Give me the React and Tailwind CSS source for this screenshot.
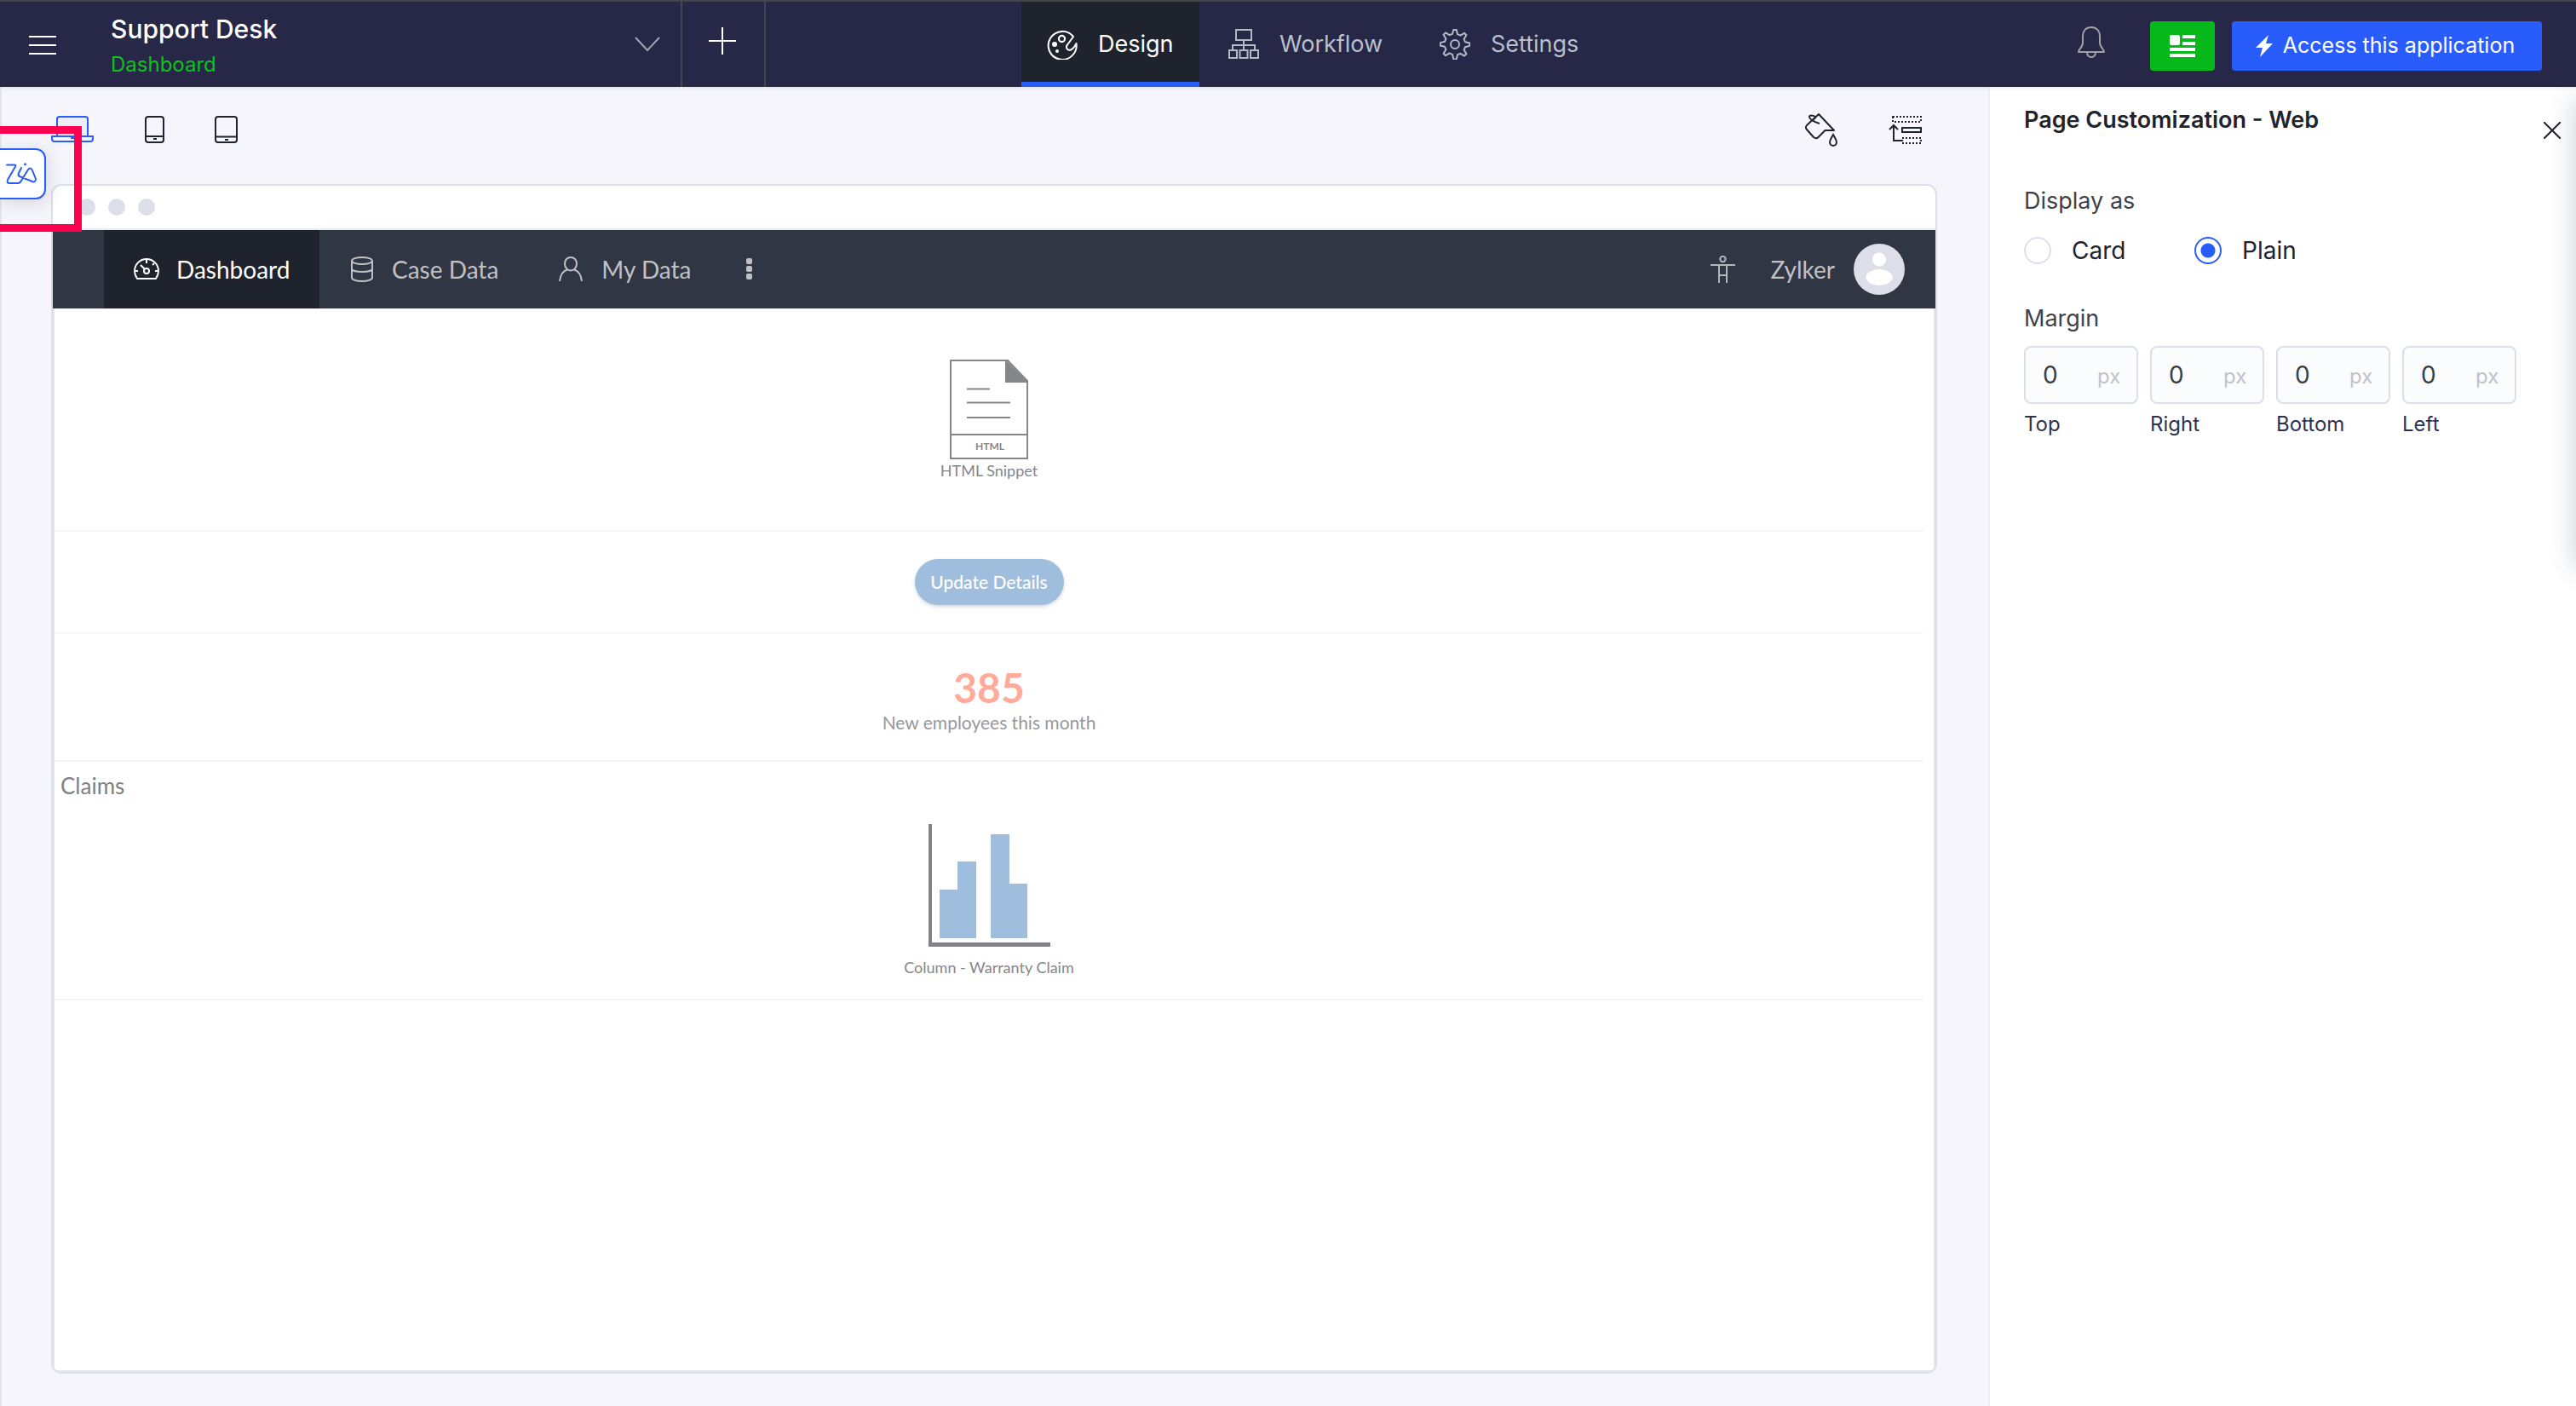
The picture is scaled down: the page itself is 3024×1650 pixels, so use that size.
import { useState } from 'react';

const MenuIcon = () => (
  <svg width="32" height="22" viewBox="0 0 32 22" stroke="#fff" strokeWidth="2">
    <path d="M0 1h32M0 11h32M0 21h32" />
  </svg>
);

const ChevronIcon = () => (
  <svg width="30" height="18" viewBox="0 0 30 18" fill="none" stroke="#a3a5b3" strokeWidth="2">
    <path d="M1 1l14 15L29 1" />
  </svg>
);

const PlusIcon = () => (
  <svg width="32" height="32" viewBox="0 0 32 32" stroke="#fff" strokeWidth="2">
    <path d="M16 0v32M0 16h32" />
  </svg>
);

const PaletteIcon = () => (
  <svg width="36" height="36" viewBox="0 0 36 36" fill="none" stroke="#fff" strokeWidth="2">
    <path d="M31 9A16.500 16.500 0 1 0 34.500 17c-1.500 3-3.500 6-6.500 7.500-4 1.500-6.500-3-4-6C25.500 16.500 28.500 12.500 31 9z" strokeLinejoin="round" />
    <circle cx="17.500" cy="11.500" r="3.600" strokeWidth="2.200" />
    <circle cx="9" cy="18" r="3" fill="#fff" stroke="none" />
    <circle cx="12" cy="26" r="2" fill="#fff" stroke="none" />
  </svg>
);

const WorkflowIcon = () => (
  <svg width="36" height="36" viewBox="0 0 36 36" fill="none" stroke="#b5bac6" strokeWidth="2">
    <rect x="9" y="1" width="18" height="12" />
    <path d="M18 13v12M5 25v-6h26v6" />
    <rect x="1" y="25" width="9" height="9" />
    <rect x="13.500" y="25" width="9" height="9" />
    <rect x="26" y="25" width="9" height="9" />
  </svg>
);

const GearIcon = () => (
  <svg width="36" height="36" viewBox="0 0 36 36" fill="none" stroke="#b5bac6" strokeWidth="2" strokeLinejoin="round">
    <circle cx="18" cy="18" r="5" />
    <path d="M16.300 1h3.400l1.300 5.200 3.400 1.400 4.600-2.800 2.400 2.400-2.800 4.600 1.400 3.400 5.200 1.300v3.400l-5.200 1.300-1.400 3.400 2.800 4.600-2.400 2.400-4.600-2.800-3.400 1.400-1.300 5.200h-3.400L15 29.800l-3.400-1.400L7 31.200l-2.400-2.400 2.800-4.600L6 20.800l-5.200-1.300v-3.400L6 14.800l1.400-3.400-2.800-4.600L7 4.400l4.600 2.800L15 5.800z" />
  </svg>
);

const BellIcon = () => (
  <svg width="32" height="38" viewBox="0 0 32 38" fill="none" stroke="#a2a1a4" strokeWidth="2" strokeLinejoin="round">
    <path d="M6 12C6 5 10 1 16 1s10 4 10 11v7c0 5 5 8 5 11H1c0-3 5-6 5-11z" />
    <path d="M11 30c0 4 2 6 5 6s5-2 5-6" />
  </svg>
);

const NewsIcon = () => (
  <svg width="30" height="26" viewBox="0 0 30 26" fill="#fff">
    <rect width="12" height="12" rx="2" />
    <path d="M15 0h15v4H15zM15 8h15v4H15zM0 15h30v4H0zM0 22h30v4H0z" />
  </svg>
);

const BoltIcon = () => (
  <svg width="20" height="26" viewBox="0 0 20 26" fill="#fff">
    <path d="M15 0L0 15h8L5 26l15-16h-8z" />
  </svg>
);

const LaptopIcon = () => (
  <svg width="50" height="32" viewBox="0 0 50 32" fill="none" stroke="#295dfb" strokeWidth="2">
    <path d="M7 24V4a3 3 0 0 1 3-3h30a3 3 0 0 1 3 3v20" fill="#ecedf5" />
    <path d="M1 24h48v3c0 2-1 3-3 3H4c-2 0-3-1-3-3z" />
    <path d="M23 26h6" />
  </svg>
);

const PhoneIcon = () => (
  <svg width="24" height="32" viewBox="0 0 24 32" fill="none" stroke="#1f232d" strokeWidth="2">
    <rect x="1" y="1" width="21" height="30" rx="3" />
    <path d="M1 24h21M10 27h4" />
  </svg>
);

const TabletIcon = () => (
  <svg width="28" height="32" viewBox="0 0 28 32" fill="none" stroke="#1f232d" strokeWidth="2">
    <rect x="1" y="1" width="25" height="30" rx="3" />
    <path d="M1 24.500h25M12 28h4" />
  </svg>
);

const PaintIcon = () => (
  <svg width="38" height="40" viewBox="0 0 38 40" fill="none" stroke="#1f232d" strokeWidth="2">
    <path d="M16 1L2 14c-1.500 2-1 4 0 5l8 9c2 1.500 4 1.500 5.500 0l8-8H34z" strokeLinejoin="round" />
    <path d="M12 4c-3-2-7-2-7 0 0 3 6 6 12 8M8 9l5-5" />
    <path d="M33 25c-3 5-4 7-4 9a4 4 0 0 0 8 0c0-2-1-4-4-9z" />
  </svg>
);

const ReorderIcon = () => (
  <svg width="40" height="34" viewBox="0 0 40 34" fill="none" stroke="#1f232d" strokeWidth="2">
    <rect x="5" y="1" width="33" height="6" strokeDasharray="2 2" />
    <rect x="16" y="14" width="22" height="5" />
    <rect x="16" y="26" width="22" height="6" strokeDasharray="2 2" />
    <path d="M16 29H6V12M1 16l5-5 5 5" />
  </svg>
);

const GaugeIcon = () => (
  <svg width="30" height="26" viewBox="0 0 30 26" fill="none" stroke="#fff" strokeWidth="2">
    <path d="M4 24C2 21 1 18 1 15a14 14 0 0 1 28 0c0 3-1 6-3 9z" strokeLinejoin="round" />
    <circle cx="15" cy="15" r="3" />
    <path d="M13 13L8 8M15 2v4M1 15h4M25 15h4M24 6l-2 2" />
  </svg>
);

const DatabaseIcon = () => (
  <svg width="26" height="30" viewBox="0 0 26 30" fill="none" stroke="#c0c1c5" strokeWidth="2">
    <ellipse cx="13" cy="5" rx="12" ry="4" />
    <path d="M1 5v20c0 2 5 4 12 4s12-2 12-4V5M1 14.500c0 2 5 3.500 12 3.500s12-1.500 12-3.500" />
  </svg>
);

const PersonIcon = () => (
  <svg width="28" height="30" viewBox="0 0 28 30" fill="none" stroke="#c0c1c5" strokeWidth="2">
    <path d="M14 1c4 0 7 3 7 7.500S18 16.500 14 16.500 7 13 7 8.500 10 1 14 1z" />
    <path d="M1 29c1-8 5-12.500 9-13.500M27 29c-1-8-5-12.500-9-13.500" />
  </svg>
);

const MoreIcon = () => (
  <svg width="8" height="26" viewBox="0 0 8 26" fill="#c0c1c5">
    <rect width="7" height="7" rx="2" />
    <rect y="9" width="7" height="7" rx="2" />
    <rect y="18" width="7" height="7" rx="2" />
  </svg>
);

const AccessibilityIcon = () => (
  <svg width="30" height="32" viewBox="0 0 30 32" fill="none" stroke="#b4b6ba" strokeWidth="2">
    <circle cx="14.500" cy="4" r="3.200" />
    <path d="M0 11h29M10 11v21M19 11v21M10 23h9" />
  </svg>
);

const Avatar = () => (
  <svg width="60" height="60" viewBox="0 0 60 60">
    <circle cx="30" cy="30" r="30" fill="#dcdfe8" />
    <circle cx="30" cy="18.500" r="8" fill="#fff" />
    <ellipse cx="30" cy="39.500" rx="15.500" ry="9.500" fill="#fff" />
  </svg>
);

const ZiaLogo = () => (
  <svg width="36" height="26" viewBox="0 0 36 26" fill="none" stroke="#295dfb" strokeWidth="2" strokeLinecap="round" strokeLinejoin="round">
    <path d="M1 2.500h9c1.500 0 1.500 1 1 2L2 20c-1 3 0 4 2 4h10c2 0 3-1 4-3l8-13c2-2.500 4-1.500 5 1l4 10c0 3-2 4-4 3L16 16c-2-1-2-2-1-4l3-6" />
    <circle cx="22.500" cy="1.800" r="1.500" fill="#295dfb" stroke="none" />
  </svg>
);

const HtmlFileIcon = () => (
  <svg width="92" height="118" viewBox="0 0 92 118" fill="none" stroke="#85868a" strokeWidth="2">
    <path d="M1 1h67l23 24v91H1zM1 88h90" />
    <path d="M66 2v24h24z" fill="#85868a" />
    <path d="M20 34.500h27M20 50.500h51M20 68h51" />
    <text x="47" y="106" textAnchor="middle" fontSize="12" fontWeight="700" fill="#85868a" stroke="none">
      HTML
    </text>
  </svg>
);

const ChartIcon = () => (
  <svg width="143" height="144" viewBox="0 0 143 144">
    <path d="M0 0h4v139h139v5H0z" fill="#828387" />
    <path d="M13 77h21v57H13zM34 44h22v90H34zM73 12h22v122H73zM95 70h21v64H95z" fill="#9fbedd" />
  </svg>
);

const tabs = [
  { name: 'Design', Icon: PaletteIcon },
  { name: 'Workflow', Icon: WorkflowIcon },
  { name: 'Settings', Icon: GearIcon },
];

const pages = [
  { name: 'Dashboard', Icon: GaugeIcon },
  { name: 'Case Data', Icon: DatabaseIcon },
  { name: 'My Data', Icon: PersonIcon },
];

const Header = () => (
  <header className="relative z-10 h-[102px] flex items-stretch bg-[#272747] border-t-2 border-[#464648] shadow-[0_2px_4px_rgba(39,39,71,0.08)]">
    <button aria-label="Menu" className="w-[130px] pl-[34px] pt-0.5 flex items-center">
      <MenuIcon />
    </button>
    <button className="w-[669px] pr-6 pt-1 flex items-center justify-between text-left">
      <span>
        <span className="block text-[30px] leading-10 font-medium text-white">Support Desk</span>
        <span className="block mt-1 text-[24px] leading-9 text-[#0fc01f]">Dashboard</span>
      </span>
      <span className="pb-1">
        <ChevronIcon />
      </span>
    </button>
    <button aria-label="Add" className="w-[100px] pb-2 pr-0.5 flex items-center justify-center border-x-2 border-[#424250]">
      <PlusIcon />
    </button>

    <nav className="ml-[300px] flex text-[27px]">
      {tabs.map(({ name, Icon }) => (
        <a
          key={name}
          href="#"
          className={
            name === 'Design'
              ? 'w-[209px] pl-[30px] pt-1.5 flex items-center gap-6 bg-[#1f232d] text-white border-b-6 border-[#295dfb]'
              : 'w-[248px] pl-[34px] pt-1.5 flex items-center gap-6 text-[#b9bfcb] border-b-6 border-transparent'
          }
        >
          <Icon />
          {name}
        </a>
      ))}
    </nav>

    <div className="ml-auto pr-10 pt-1 flex items-center">
      <button aria-label="Notifications" className="mr-[53px] pb-2">
        <BellIcon />
      </button>
      <button aria-label="News" className="w-[76px] h-[58px] mr-5 rounded bg-[#07b81b] flex items-center justify-center">
        <NewsIcon />
      </button>
      <button className="w-[364px] h-[58px] pr-1 rounded bg-[#295dfb] text-white text-[25px] flex items-center justify-center gap-3">
        <BoltIcon />
        Access this application
      </button>
    </div>
  </header>
);

const Preview = () => (
  <div className="flex-1 flex flex-col bg-white border-2 border-[#dcdfe8] rounded-xl overflow-hidden font-['Lato',sans-serif]">
    <div className="h-[52px] pl-[30px] flex items-center gap-[15px] border-b-2 border-[#ecedf3]">
      <span className="size-5 rounded-full bg-[#dcdfe8]" />
      <span className="size-5 rounded-full bg-[#dcdfe8]" />
      <span className="size-5 rounded-full bg-[#dcdfe8]" />
    </div>

    <nav className="h-[92px] pl-[60px] pr-9 flex items-stretch bg-[#313644] text-[28px] text-[#c0c1c5]">
      {pages.map(({ name, Icon }) => (
        <a
          key={name}
          href="#"
          className={
            name === 'Dashboard'
              ? 'w-[253px] pl-[35px] flex items-center gap-5 bg-[#1f232d] text-white'
              : 'pl-[37px] pr-[34px] flex items-center gap-[22px]'
          }
        >
          <Icon />
          {name}
        </a>
      ))}
      <button aria-label="More" className="ml-[30px]">
        <MoreIcon />
      </button>
      <div className="ml-auto flex items-center">
        <AccessibilityIcon />
        <span className="ml-[41px] mr-[22px]">Zylker</span>
        <Avatar />
      </div>
    </nav>

    <div className="flex-1 pr-3 border-2 border-t-0 border-[#e2e5e9]">
      <section className="h-[262px] pt-[60px] flex flex-col items-center border-b-2 border-[#f4f4f5]">
        <HtmlFileIcon />
        <p className="text-[18px] leading-6 text-[#85868a]">HTML Snippet</p>
      </section>

      <section className="h-[120px] flex items-center justify-center border-b-2 border-[#f8f8f8]">
        <button className="w-[175px] h-[54px] rounded-full bg-[#9fbedd] text-white text-[21px] font-medium shadow-[0_2px_4px_rgba(40,60,100,0.2)]">
          Update Details
        </button>
      </section>

      <section className="h-[150px] pt-[34px] flex flex-col items-center border-b-2 border-[#f4f4f5]">
        <p className="text-[48px] leading-[58px] font-bold text-[#ffab9b]">385</p>
        <p className="text-[21px] leading-6 text-[#96989d]">New employees this month</p>
      </section>

      <section className="h-[280px] border-b-2 border-[#f4f4f5]">
        <h2 className="pl-[7px] pt-2.5 text-[26px] leading-9 text-[#7d7f84]">Claims</h2>
        <div className="pt-[27px] flex flex-col items-center gap-3">
          <ChartIcon />
          <p className="text-[18px] leading-6 text-[#85868a]">Column - Warranty Claim</p>
        </div>
      </section>
    </div>
  </div>
);

const MarginInput = ({ side }) => (
  <div className="w-[134px]">
    <div className="h-[68px] flex items-center bg-[#fbfcfe] border-2 border-[#dcdfe8] rounded-lg">
      <input
        id={side}
        type="text"
        defaultValue="0"
        className="w-[84px] pl-5 bg-transparent text-[28px] text-[#3c3d42] focus:outline-none"
      />
      <span className="pt-1 text-[24px] text-[#c0c2c8]">px</span>
    </div>
    <label htmlFor={side} className="block mt-1 text-[24px] leading-10 text-[#2c3350]">
      {side}
    </label>
  </div>
);

const CustomizationPanel = () => {
  const [display, setDisplay] = useState('Plain');

  return (
    <aside className="relative w-[690px] shrink-0 pl-10 bg-white border-l-2 border-[#ecedf4] overflow-hidden">
      <div className="pt-[19px] pr-[18px] flex justify-between">
        <h1 className="text-[27px] leading-10 font-semibold text-[#1f232d]">Page Customization - Web</h1>
        <button aria-label="Close" className="pt-[22px]">
          <svg width="20" height="20" viewBox="0 0 20 20" stroke="#1f232d" strokeWidth="2">
            <path d="M0 0l20 20M20 0L0 20" />
          </svg>
        </button>
      </div>

      <fieldset className="mt-[53px]">
        <legend className="text-[27px] leading-10 text-[#414247]">Display as</legend>
        <div className="mt-[18px] flex items-center text-[28px] leading-10 text-[#1f232d]">
          {['Card', 'Plain'].map((name) => (
            <label key={name} className="w-[200px] flex items-center gap-6">
              <input
                type="radio"
                name="display"
                checked={display === name}
                onChange={() => setDisplay(name)}
                className="appearance-none size-8 rounded-full border-2 border-[#dcdfe8] checked:border-[#295dfb] checked:bg-[radial-gradient(circle,#295dfb_8px,#fff_9px)]"
              />
              {name}
            </label>
          ))}
        </div>
      </fieldset>

      <fieldset className="mt-10">
        <legend className="text-[27px] leading-10 text-[#414247]">Margin</legend>
        <div className="mt-3 flex gap-[14px]">
          {['Top', 'Right', 'Bottom', 'Left'].map((side) => (
            <MarginInput key={side} side={side} />
          ))}
        </div>
      </fieldset>

      {/* Shadow of the drawer parked off screen */}
      <div className="absolute top-4 left-full w-10 h-[546px] shadow-[0_0_32px_rgba(40,50,80,0.25)]" />
    </aside>
  );
};

const App = () => (
  <div className="min-h-screen flex flex-col font-['Inter',sans-serif]">
    <Header />
    <div className="flex-1 flex">
      <main className="relative flex-1 flex flex-col pl-[58px] pr-[60px] pb-[38px] bg-[#f5f5fb] border-l-2 border-[#e4e4e8]">
        <div className="h-[114px] pt-[31px] pr-[17px] flex items-start">
          <button aria-label="Desktop" className="pt-[3px]"><LaptopIcon /></button>
          <button aria-label="Phone" className="ml-[60px] pt-[3px]"><PhoneIcon /></button>
          <button aria-label="Tablet" className="ml-[58px] pt-[3px]"><TabletIcon /></button>
          <button aria-label="Theme" className="ml-auto"><PaintIcon /></button>
          <button aria-label="Rearrange" className="ml-[60px] pt-[3px]"><ReorderIcon /></button>
        </div>
        <Preview />

        {/* Zia tab and the highlight around it */}
        <button
          aria-label="Zia"
          className="absolute -left-0.5 top-[72px] w-[54px] h-[60px] pl-[7px] bg-white border-2 border-l-0 border-[#295dfb] rounded-r-xl shadow-[2px_4px_20px_rgba(40,50,80,0.15)]"
        >
          <ZiaLogo />
        </button>
        <div className="absolute -left-0.5 top-[46px] w-24 h-[124px] border-[9px] border-l-0 border-[#ff0050] pointer-events-none" />
      </main>
      <CustomizationPanel />
    </div>
  </div>
);

export default App;
